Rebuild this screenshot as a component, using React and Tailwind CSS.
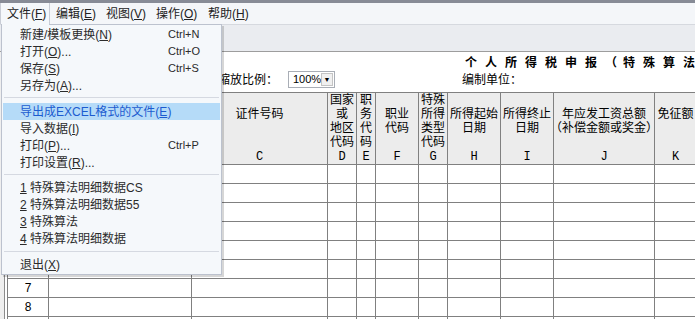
import React from "react";

const font = "font-['Liberation_Sans','Noto_Sans_CJK_SC',sans-serif]";

// 表头各列：宽度含右边框
const cols = [
  { id: "", lines: [] },
  { id: "", lines: [] },
  { id: "C", lines: ["证件号码", "\u00a0"] },
  { id: "D", lines: ["国家", "或", "地区", "代码"] },
  { id: "E", lines: ["职", "务", "代", "码"] },
  { id: "F", lines: ["职业", "代码"] },
  { id: "G", lines: ["特殊", "所得", "类型", "代码"] },
  { id: "H", lines: ["所得起始", "日期"] },
  { id: "I", lines: ["所得终止", "日期"] },
  { id: "J", lines: ["年应发工资总额", "（补偿金额或奖金）"] },
  { id: "K", lines: ["免征额", "\u00a0"] },
  { id: "L", lines: [] },
];

const rows = [1, 2, 3, 4, 5, 6, 7, 8, 9, 10];

const title = "个人所得税申报（特殊算法".split("");

function MenuItem({ children, shortcut, active }) {
  return (
    <div
      className={
        active
          ? "mx-[1px] flex h-[17px] items-center bg-[#b5dbf8] pl-[17px] text-[#1c5bd0]"
          : "mx-[1px] flex h-[17px] items-center pl-[17px] text-[#2b2b2b]"
      }
    >
      <span className="w-[148px] whitespace-nowrap">{children}</span>
      {shortcut && <span className="text-[11px]">{shortcut}</span>}
    </div>
  );
}

function Sep({ className }) {
  return (
    <div className={className}>
      <div className="mx-[2px] h-px bg-[#d5d9e1]" />
    </div>
  );
}

function HeaderCell({ col }) {
  return (
    <div className="flex h-[72px] flex-col border-r border-b border-[#808080] bg-[#ececec]">
      <div className="flex h-[56px] flex-col items-center justify-center leading-[14px] whitespace-nowrap">
        {col.lines.map((l, i) => (
          <div key={i}>{l}</div>
        ))}
      </div>
      <div className="flex h-[15px] items-center justify-center font-['Liberation_Mono',monospace] text-[12px]">
        {col.id}
      </div>
    </div>
  );
}

export default function App() {
  return (
    <div className={`relative h-[319px] w-[695px] overflow-hidden bg-white text-[12px] text-black ${font}`}>
      <div className="h-[3px] bg-[#878b96]" />

      {/* 菜单栏 */}
      <div className="flex h-[21px] items-center bg-[#f4f6f9] text-[#222]">
        <div className="flex h-full w-[50px] items-center border-x border-[#c9cdd6] bg-[#f5f8fb] pl-[6px]">
          文件(<u>F</u>)
        </div>
        <div className="w-[50px] pl-[6px]">编辑(<u>E</u>)</div>
        <div className="w-[50px] pl-[6px]">视图(<u>V</u>)</div>
        <div className="w-[52px] pl-[6px]">操作(<u>O</u>)</div>
        <div className="w-[50px] pl-[6px]">帮助(<u>H</u>)</div>
      </div>

      {/* 工具栏 */}
      <div className="h-[28px] border-y border-t-[#d6d9df] border-b-[#9d9d9d] bg-[#eaecf0]" />

      <div className="flex">
        <div className="flex w-[8px] shrink-0">
          <div className="w-[5px] border-r border-[#8c8c8c] bg-[#efefef]" />
          <div className="w-[2px]" />
          <div className="w-px bg-[#808080]" />
        </div>

        <div className="flex-1">
          <div className="h-[37px]">
            <div className="mt-[3px] flex h-[16px] items-center pl-[457px] font-bold">
              {title.map((ch, i) => (
                <span key={i} className={ch === "（" ? "w-[18px] shrink-0" : "w-[20px] shrink-0"}>
                  {ch}
                </span>
              ))}
            </div>
            <div className="flex h-[17px] items-center">
              <span className="ml-[210px] w-[60px] whitespace-nowrap">缩放比例：</span>
              <div className="ml-[10px] flex h-[17px] w-[47px] items-center border border-[#a9aeb6] bg-white">
                <span className="flex-1 pl-[4px] text-[11px]">100%</span>
                <span className="mr-[1px] flex h-[13px] w-[14px] items-center justify-center border border-[#c4c4c4] bg-[#f0f0f0] text-[7px] leading-none">
                  ▼
                </span>
              </div>
              <span className="ml-[127px] whitespace-nowrap">编制单位：</span>
            </div>
          </div>

          <div className="grid w-max grid-cols-[41px_143px_136px_29px_19px_43px_29px_53px_53px_101px_42px_60px] border-t border-[#808080]">
            {cols.map((c, i) => (
              <HeaderCell key={i} col={c} />
            ))}
            {rows.map((r) =>
              cols.map((c, i) => (
                <div
                  key={r + "-" + i}
                  className="flex h-[19px] items-center justify-center border-r border-b border-[#808080]"
                >
                  {i === 0 ? r : null}
                </div>
              ))
            )}
          </div>
        </div>
      </div>

      {/* 文件 下拉菜单 */}
      <div className="absolute left-[1px] top-[24px] w-[221px] border border-[#bcc2ce] bg-[#f5f8fb] pt-[1px] pb-[1px] shadow-[2px_2px_0_rgba(0,0,0,0.16)]">
        <div className="absolute -top-px left-0 h-px w-[47px] bg-[#f5f8fb]" />
        <MenuItem shortcut="Ctrl+N">新建/模板更换(<u>N</u>)</MenuItem>
        <MenuItem shortcut="Ctrl+O">打开(<u>O</u>)...</MenuItem>
        <MenuItem shortcut="Ctrl+S">保存(<u>S</u>)</MenuItem>
        <MenuItem>另存为(<u>A</u>)...</MenuItem>
        <Sep className="h-[9px] pt-[3px]" />
        <MenuItem active>导出成EXCEL格式的文件(<u>E</u>)</MenuItem>
        <MenuItem>导入数据(<u>I</u>)</MenuItem>
        <MenuItem shortcut="Ctrl+P">打印(<u>P</u>)...</MenuItem>
        <MenuItem>打印设置(<u>R</u>)...</MenuItem>
        <Sep className="h-[8px] pt-[3px]" />
        <MenuItem><u>1</u> 特殊算法明细数据CS</MenuItem>
        <MenuItem><u>2</u> 特殊算法明细数据55</MenuItem>
        <MenuItem><u>3</u> 特殊算法</MenuItem>
        <MenuItem><u>4</u> 特殊算法明细数据</MenuItem>
        <Sep className="h-[9px] pt-[4px]" />
        <MenuItem>退出(<u>X</u>)</MenuItem>
      </div>
    </div>
  );
}
